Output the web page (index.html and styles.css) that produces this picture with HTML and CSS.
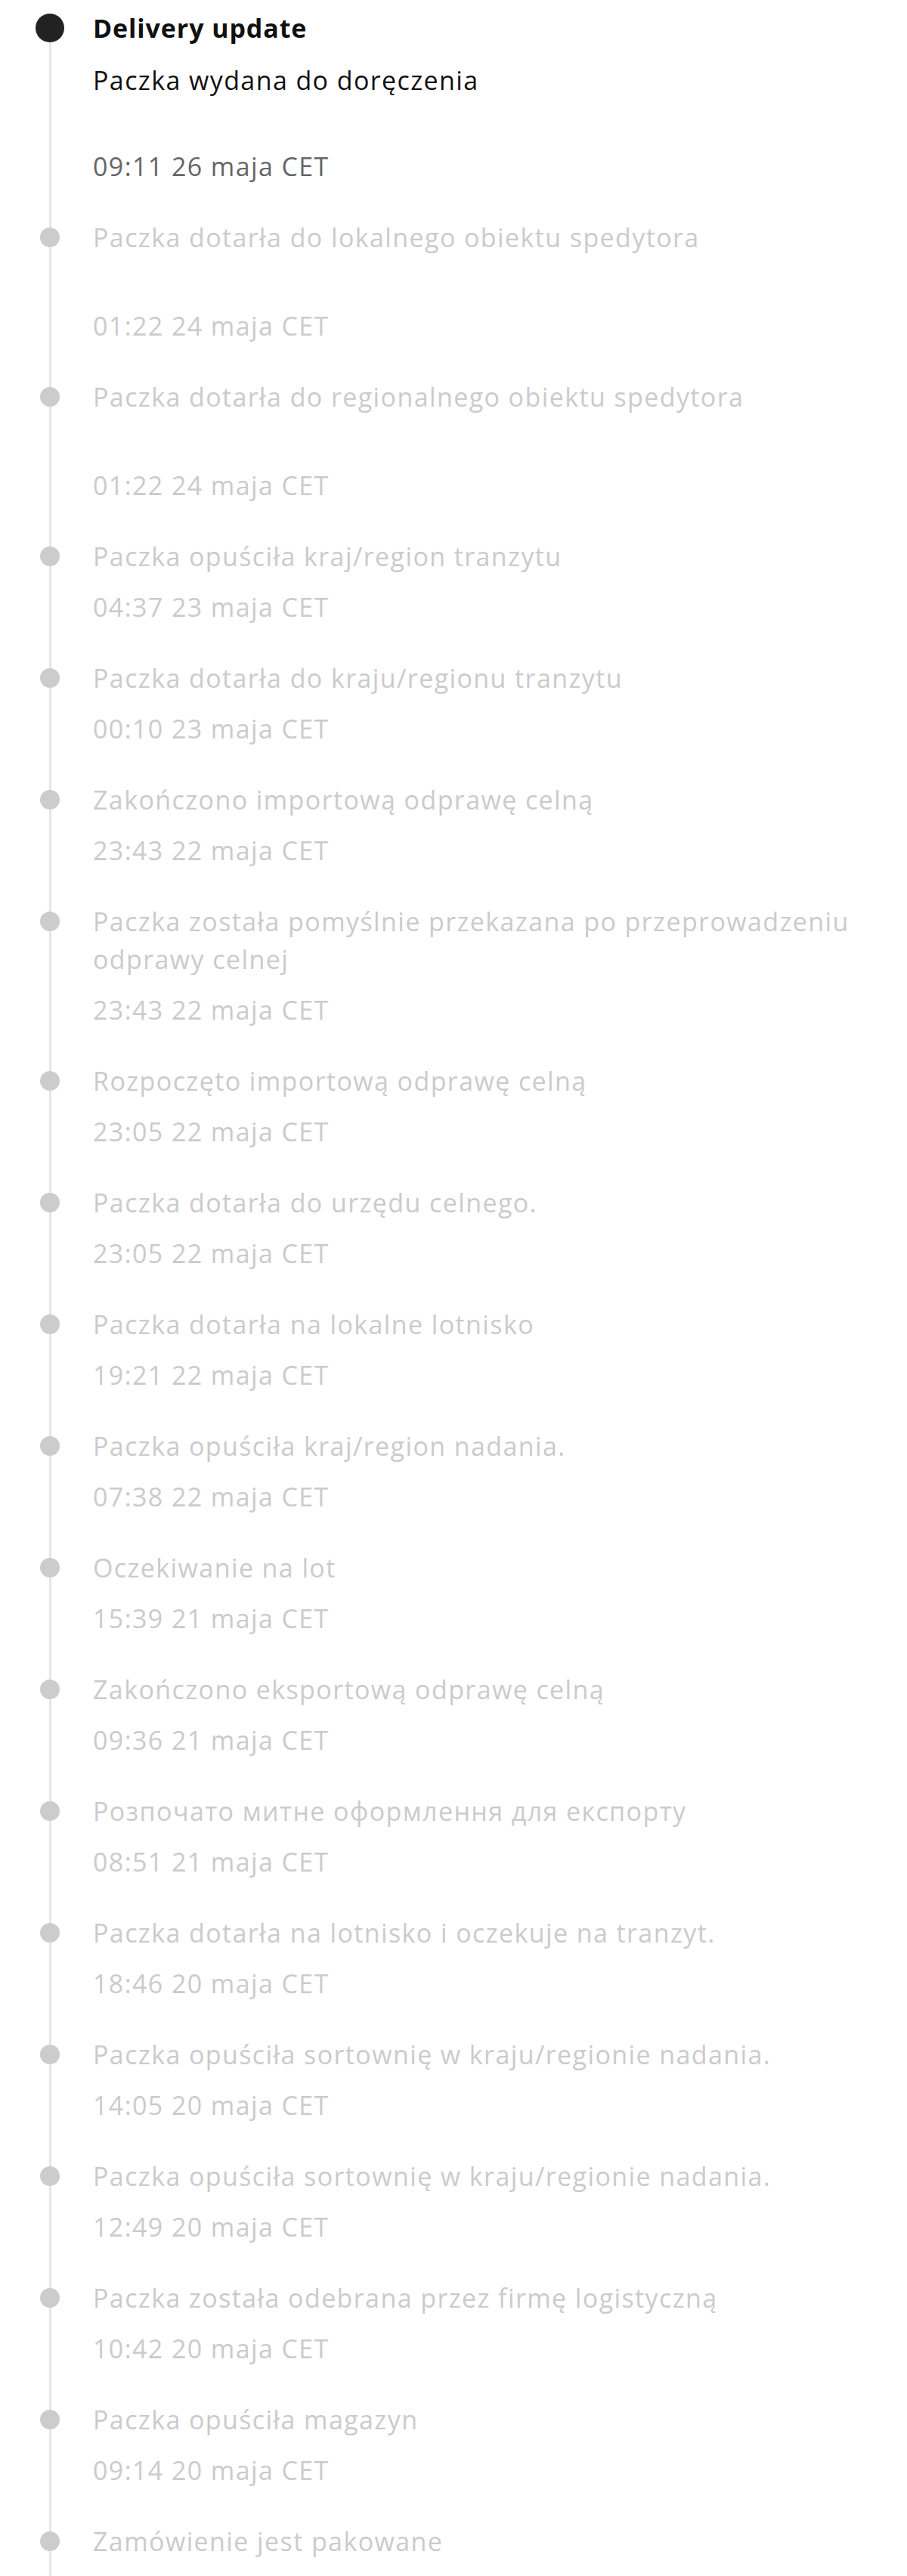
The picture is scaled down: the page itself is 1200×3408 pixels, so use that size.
FILE: index.html
```html
<!DOCTYPE html>
<html lang="pl">
<head>
    <meta charset="UTF-8">
    <meta name="viewport" content="width=device-width, initial-scale=1.0">
    <title>Delivery update</title>
    <link rel="stylesheet" href="styles.css">
</head>
<body>

    <!-- Tracking timeline -->
    <div class="timeline">

        <div class="step active">
            <div class="marker"><span class="dot"></span></div>
            <div class="info">
                <div class="heading">Delivery update</div>
                <div class="title">Paczka wydana do doręczenia</div>
                <div class="note"></div>
                <div class="time">09:11 26 maja CET</div>
            </div>
        </div>

        <div class="step">
            <div class="marker"><span class="dot"></span></div>
            <div class="info">
                <div class="title">Paczka dotarła do lokalnego obiektu spedytora</div>
                <div class="note"></div>
                <div class="time">01:22 24 maja CET</div>
            </div>
        </div>

        <div class="step">
            <div class="marker"><span class="dot"></span></div>
            <div class="info">
                <div class="title">Paczka dotarła do regionalnego obiektu spedytora</div>
                <div class="note"></div>
                <div class="time">01:22 24 maja CET</div>
            </div>
        </div>

        <div class="step">
            <div class="marker"><span class="dot"></span></div>
            <div class="info">
                <div class="title">Paczka opuściła kraj/region tranzytu</div>
                <div class="time">04:37 23 maja CET</div>
            </div>
        </div>

        <div class="step">
            <div class="marker"><span class="dot"></span></div>
            <div class="info">
                <div class="title">Paczka dotarła do kraju/regionu tranzytu</div>
                <div class="time">00:10 23 maja CET</div>
            </div>
        </div>

        <div class="step">
            <div class="marker"><span class="dot"></span></div>
            <div class="info">
                <div class="title">Zakończono importową odprawę celną</div>
                <div class="time">23:43 22 maja CET</div>
            </div>
        </div>

        <div class="step">
            <div class="marker"><span class="dot"></span></div>
            <div class="info">
                <div class="title">Paczka została pomyślnie przekazana po przeprowadzeniu odprawy celnej</div>
                <div class="time">23:43 22 maja CET</div>
            </div>
        </div>

        <div class="step">
            <div class="marker"><span class="dot"></span></div>
            <div class="info">
                <div class="title">Rozpoczęto importową odprawę celną</div>
                <div class="time">23:05 22 maja CET</div>
            </div>
        </div>

        <div class="step">
            <div class="marker"><span class="dot"></span></div>
            <div class="info">
                <div class="title">Paczka dotarła do urzędu celnego.</div>
                <div class="time">23:05 22 maja CET</div>
            </div>
        </div>

        <div class="step">
            <div class="marker"><span class="dot"></span></div>
            <div class="info">
                <div class="title">Paczka dotarła na lokalne lotnisko</div>
                <div class="time">19:21 22 maja CET</div>
            </div>
        </div>

        <div class="step">
            <div class="marker"><span class="dot"></span></div>
            <div class="info">
                <div class="title">Paczka opuściła kraj/region nadania.</div>
                <div class="time">07:38 22 maja CET</div>
            </div>
        </div>

        <div class="step">
            <div class="marker"><span class="dot"></span></div>
            <div class="info">
                <div class="title">Oczekiwanie na lot</div>
                <div class="time">15:39 21 maja CET</div>
            </div>
        </div>

        <div class="step">
            <div class="marker"><span class="dot"></span></div>
            <div class="info">
                <div class="title">Zakończono eksportową odprawę celną</div>
                <div class="time">09:36 21 maja CET</div>
            </div>
        </div>

        <div class="step">
            <div class="marker"><span class="dot"></span></div>
            <div class="info">
                <div class="title">Розпочато митне оформлення для експорту</div>
                <div class="time">08:51 21 maja CET</div>
            </div>
        </div>

        <div class="step">
            <div class="marker"><span class="dot"></span></div>
            <div class="info">
                <div class="title">Paczka dotarła na lotnisko i oczekuje na tranzyt.</div>
                <div class="time">18:46 20 maja CET</div>
            </div>
        </div>

        <div class="step">
            <div class="marker"><span class="dot"></span></div>
            <div class="info">
                <div class="title">Paczka opuściła sortownię w kraju/regionie nadania.</div>
                <div class="time">14:05 20 maja CET</div>
            </div>
        </div>

        <div class="step">
            <div class="marker"><span class="dot"></span></div>
            <div class="info">
                <div class="title">Paczka opuściła sortownię w kraju/regionie nadania.</div>
                <div class="time">12:49 20 maja CET</div>
            </div>
        </div>

        <div class="step">
            <div class="marker"><span class="dot"></span></div>
            <div class="info">
                <div class="title">Paczka została odebrana przez firmę logistyczną</div>
                <div class="time">10:42 20 maja CET</div>
            </div>
        </div>

        <div class="step">
            <div class="marker"><span class="dot"></span></div>
            <div class="info">
                <div class="title">Paczka opuściła magazyn</div>
                <div class="time">09:14 20 maja CET</div>
            </div>
        </div>

        <div class="step">
            <div class="marker"><span class="dot"></span></div>
            <div class="info">
                <div class="title">Zamówienie jest pakowane</div>
                <div class="time"></div>
            </div>
        </div>

    </div>

</body>
</html>
```

FILE: styles.css
```css
body {
    margin: 0;
    background-color: #fff;
    font-family: "Open Sans", "Noto Sans", sans-serif;
}

/* Timeline */
.timeline {
    padding: 12px 40px 0 47px;
}

.step {
    display: flex;
}

/* Left column: dot and vertical line */
.marker {
    width: 38px;
    flex-shrink: 0;
    margin-right: 38px;
    display: flex;
    flex-direction: column;
    align-items: center;
    background: linear-gradient(#e6e6e6, #e6e6e6) no-repeat center / 3px 100%;
}

.dot {
    width: 26px;
    height: 26px;
    margin-top: 12px;
    border-radius: 50%;
    background-color: #cccccc;
}

.step.active .dot {
    width: 38px;
    height: 38px;
    margin-top: 6px;
    background-color: #222;
}

.step.active .marker {
    background-position: center 40px;
}

/* Right column: texts */
.info {
    flex: 1;
    padding-bottom: 44px;
    font-size: 34px;
    line-height: 50px;
    letter-spacing: 1.4px;
    color: #cbcbcb;
}

.heading {
    font-weight: bold;
    letter-spacing: 0.9px;
    color: #111;
    margin-bottom: 19px;
}

.step.active .title {
    color: #111;
}

.note {
    min-height: 50px;
}

.step.active .note {
    min-height: 47px;
}

.time {
    margin-top: 17px;
    min-height: 50px;
}

.step.active .time {
    color: #666;
}
```
